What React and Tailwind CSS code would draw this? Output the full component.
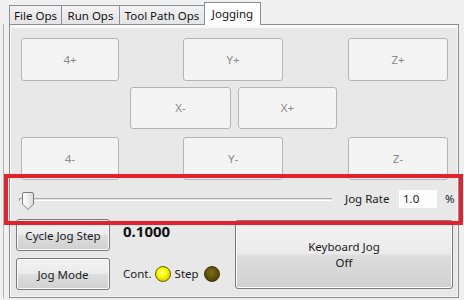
import React from "react";

function PadButton({ label, className }) {
    return (
        <div
            className={`flex items-center justify-center rounded-[3px] border border-[#b4b4b4] bg-[#f4f4f4] text-[11.5px] text-[#8a8a8a] ${className}`}
        >
            {label}
        </div>
    );
}

function WinButton({ children, className }) {
    return (
        <div
            className={`flex flex-col items-center justify-center whitespace-nowrap rounded-[3px] border border-[#7a7a7a] bg-[linear-gradient(to_bottom,#f2f2f2_0%,#ebebeb_48%,#dddddd_52%,#d0d0d0_100%)] shadow-[inset_0_0_0_1px_#fbfbfb] text-[11.5px] leading-[15px] text-[#1a1a1a] ${className}`}
        >
            {children}
        </div>
    );
}

function Tab({ label, active, className }) {
    if (active) {
        return (
            <div
                className={`relative z-10 -mb-px -ml-px flex h-[23px] items-start justify-center whitespace-nowrap border border-b-0 border-[#8c8e94] bg-white pt-[2px] text-[11.5px] text-[#111] ${className}`}
            >
                {label}
            </div>
        );
    }
    return (
        <div
            className={`-ml-px flex h-[19px] items-start justify-center whitespace-nowrap border border-b-0 border-[#8c8e94] bg-[linear-gradient(to_bottom,#f2f2f2,#e4e4e4)] pt-[1px] text-[11.5px] text-[#111] ${className}`}
        >
            {label}
        </div>
    );
}

function SliderThumb() {
    return (
        <svg width="12" height="18" viewBox="0 0 12 18">
            <defs>
                <linearGradient id="thumb" x1="0" y1="0" x2="1" y2="0">
                    <stop offset="0" stopColor="#ffffff" />
                    <stop offset="1" stopColor="#dcdcdc" />
                </linearGradient>
            </defs>
            <path
                d="M2 0.5 H10 A1.5 1.5 0 0 1 11.5 2 V12 L6 17.5 L0.5 12 V2 A1.5 1.5 0 0 1 2 0.5 Z"
                fill="url(#thumb)"
                stroke="#7c7c7c"
            />
        </svg>
    );
}

export default function App() {
    return (
        <div className="relative h-[300px] w-[464px] overflow-hidden bg-[#f0f0f0] font-['Noto_Sans',sans-serif]">
            {/* tab strip */}
            <div className="flex h-[24px] items-end pl-[10px]">
                <Tab label="File Ops" className="w-[53px]" />
                <Tab label="Run Ops" className="w-[59px]" />
                <Tab label="Tool Path Ops" className="w-[86px]" />
                <Tab label="Jogging" active className="w-[57px]" />
            </div>

            <div className="ml-[3px] flex h-[274px] border-l border-[#b5b5b5] pl-[5px]">
                <div className="flex h-[274px] w-[450px] flex-col border border-[#8c8e94] bg-[#f8f8f8] px-px pb-px pt-[3px]">
                    <div className="flex flex-1 flex-col bg-[#e8e8e8]">
                        {/* jog pad */}
                        <div className="mt-[10px] flex h-[43px]">
                            <PadButton label="4+" className="ml-[10px] w-[98px]" />
                            <PadButton label="Y+" className="ml-[64px] w-[100px]" />
                            <PadButton label="Z+" className="ml-[65px] w-[100px]" />
                        </div>
                        <div className="mt-[6px] flex h-[42px]">
                            <PadButton label="X-" className="ml-[119px] w-[101px]" />
                            <PadButton label="X+" className="ml-[7px] w-[99px]" />
                        </div>
                        <div className="mt-[8px] flex h-[43px]">
                            <PadButton label="4-" className="ml-[10px] w-[98px]" />
                            <PadButton label="Y-" className="ml-[64px] w-[100px]" />
                            <PadButton label="Z-" className="ml-[65px] w-[100px]" />
                        </div>

                        {/* jog rate slider */}
                        <div className="mt-[7px] flex h-[24px] items-center whitespace-nowrap pl-[8px] text-[11.5px] text-[#1a1a1a]">
                            <div className="relative flex h-[24px] w-[313px] shrink-0 items-center">
                                <div className="h-[3px] w-full border-y border-t-[#acacac] border-b-white bg-[#e2e2e2]" />
                                <div className="absolute left-0 top-[11px] h-[3px] w-px bg-[#9a9a9a]" />
                                <div className="absolute left-[3px] top-[5px]">
                                    <SliderThumb />
                                </div>
                            </div>
                            <span className="ml-[13px] w-[44px] shrink-0">Jog Rate</span>
                            <div className="ml-[10px] flex h-[18px] w-[38px] shrink-0 items-center bg-white pl-[4px]">1.0</div>
                            <span className="ml-[8px]">%</span>
                        </div>

                        {/* bottom controls */}
                        <div className="mt-[8px] flex">
                            <div className="ml-[5px] flex w-[94px] flex-col gap-[7px]">
                                <WinButton className="h-[32px]">Cycle Jog Step</WinButton>
                                <WinButton className="h-[32px]">Jog Mode</WinButton>
                            </div>
                            <div className="ml-[13px] flex flex-1 flex-col">
                                <div className="mt-[3px] text-[15px] font-bold leading-[18px] text-[#111]">0.1000</div>
                                <div className="mt-[26px] flex h-[16px] items-center whitespace-nowrap text-[11.5px] text-[#1a1a1a]">
                                    <span>Cont.</span>
                                    <span className="ml-[3px] h-[16px] w-[16px] shrink-0 rounded-full border border-[#6b6000] bg-[radial-gradient(circle_at_45%_40%,#ffffa0_0%,#ffff00_35%,#d8c800_75%,#8a7a00_100%)]" />
                                    <span className="ml-[4px]">Step</span>
                                    <span className="ml-[5px] h-[16px] w-[16px] shrink-0 rounded-full border border-[#3a3300] bg-[radial-gradient(circle_at_45%_40%,#7a6d18_0%,#5e5208_50%,#3c3400_100%)]" />
                                </div>
                            </div>
                            <WinButton className="mr-[4px] mt-px h-[69px] w-[218px]">
                                <span className="leading-[16px]">Keyboard Jog</span>
                                <span className="leading-[16px]">Off</span>
                            </WinButton>
                        </div>
                    </div>
                </div>
            </div>

            {/* red highlight frame */}
            <div className="pointer-events-none absolute left-[4px] top-[174px] h-[51px] w-[459px] border-4 border-[#e3232b]" />
        </div>
    );
}
